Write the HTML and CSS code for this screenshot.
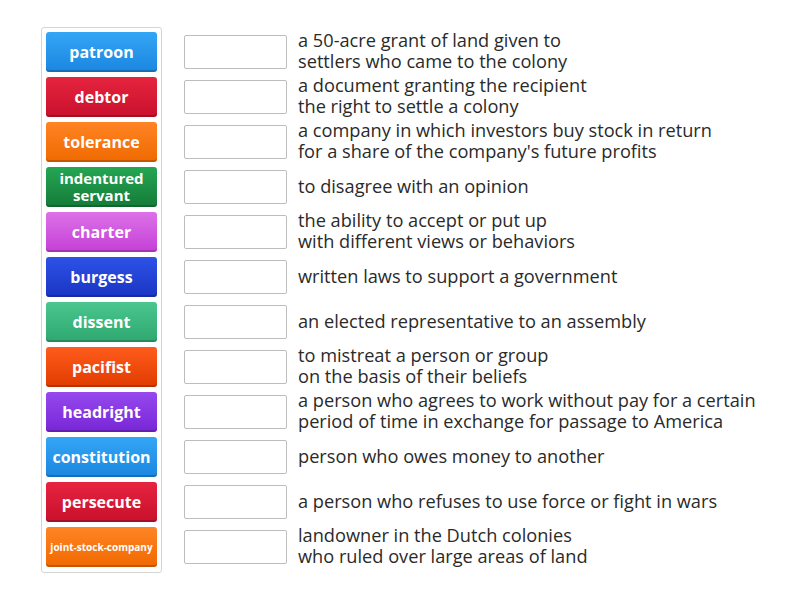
FILE: index.html
```html
<!DOCTYPE html>
<html>
<head>
<meta charset="utf-8">
<link rel="stylesheet" href="styles.css">
</head>
<body>
<div class="game">
  <div class="bank">
    <div class="tile blue">patroon</div>
    <div class="tile red">debtor</div>
    <div class="tile orange">tolerance</div>
    <div class="tile green two">indentured<br>servant</div>
    <div class="tile pink">charter</div>
    <div class="tile navy">burgess</div>
    <div class="tile teal">dissent</div>
    <div class="tile vermilion">pacifist</div>
    <div class="tile purple">headright</div>
    <div class="tile blue">constitution</div>
    <div class="tile red">persecute</div>
    <div class="tile orange tiny">joint-stock-company</div>
  </div>
  <div class="rows">
    <div class="row"><div class="slot"></div><div class="def">a 50-acre grant of land given to<br>settlers who came to the colony</div></div>
    <div class="row"><div class="slot"></div><div class="def">a document granting the recipient<br>the right to settle a colony</div></div>
    <div class="row"><div class="slot"></div><div class="def">a company in which investors buy stock in return<br>for a share of the company's future profits</div></div>
    <div class="row"><div class="slot"></div><div class="def">to disagree with an opinion</div></div>
    <div class="row"><div class="slot"></div><div class="def">the ability to accept or put up<br>with different views or behaviors</div></div>
    <div class="row"><div class="slot"></div><div class="def">written laws to support a government</div></div>
    <div class="row"><div class="slot"></div><div class="def">an elected representative to an assembly</div></div>
    <div class="row"><div class="slot"></div><div class="def">to mistreat a person or group<br>on the basis of their beliefs</div></div>
    <div class="row"><div class="slot"></div><div class="def">a person who agrees to work without pay for a certain<br>period of time in exchange for passage to America</div></div>
    <div class="row"><div class="slot"></div><div class="def">person who owes money to another</div></div>
    <div class="row"><div class="slot"></div><div class="def">a person who refuses to use force or fight in wars</div></div>
    <div class="row"><div class="slot"></div><div class="def">landowner in the Dutch colonies<br>who ruled over large areas of land</div></div>
  </div>
</div>
</body>
</html>
```
FILE: styles.css
```css
html, body {
  margin: 0;
  padding: 0;
  background: #fff;
  font-family: "Open Sans", "Liberation Sans", sans-serif;
}
.game {
  display: flex;
  align-items: flex-start;
  padding: 27px 0 0 41px;
}
.bank {
  display: flex;
  flex-direction: column;
  gap: 5px;
  padding: 4px 4px 5px 4px;
  border: 1px solid #d4d4d4;
  border-radius: 3px;
  box-sizing: border-box;
  width: 121px;
}
.tile {
  height: 40px;
  width: 111px;
  border-radius: 3px;
  color: #fff;
  font-weight: 700;
  font-size: 16px;
  display: flex;
  align-items: center;
  justify-content: center;
  text-align: center;
  box-sizing: border-box;
  box-shadow: inset 0 -2px 0 rgba(0,0,0,0.18);
}
.tile.two { font-size: 15px; line-height: 17px; }
.tile.tiny { font-size: 10px; }
.blue { background: linear-gradient(#34a6f6, #1b86e0); }
.red { background: linear-gradient(#e6243f, #c8102c); }
.orange { background: linear-gradient(#ff8424, #f06900); }
.green { background: linear-gradient(#25a653, #147b38); }
.pink { background: linear-gradient(#dc72e8, #c53fd6); }
.navy { background: linear-gradient(#2d52e8, #1a35c2); }
.teal { background: linear-gradient(#4ac68e, #2ea86f); }
.vermilion { background: linear-gradient(#ff5b1c, #e03c00); }
.purple { background: linear-gradient(#9649ee, #7826d6); }
.rows {
  display: flex;
  flex-direction: column;
  gap: 5px;
  padding-top: 5px;
  margin-left: 22px;
}
.row {
  height: 40px;
  display: flex;
  align-items: center;
}
.slot {
  width: 103px;
  height: 34px;
  border: 1px solid #bdbdbd;
  border-radius: 2px;
  box-sizing: border-box;
  flex: none;
}
.def {
  margin-left: 11px;
  margin-top: -2px;
  font-size: 18.2px;
  line-height: 21px;
  color: #2a2a2a;
  white-space: nowrap;
}
```
